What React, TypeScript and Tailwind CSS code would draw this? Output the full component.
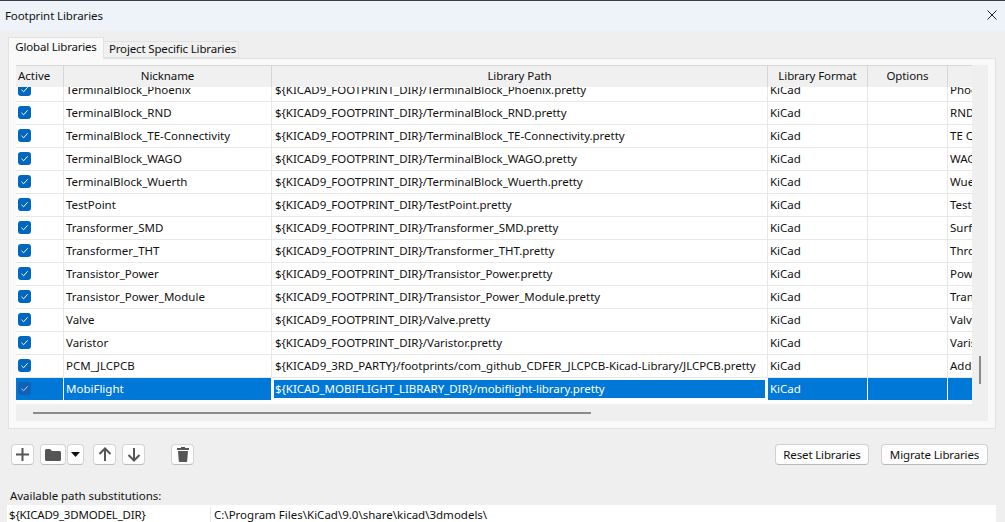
const FONT = "font-['Noto_Sans','Open_Sans',sans-serif]";

const rows = [
  { name: 'TerminalBlock_Phoenix', path: '${KICAD9_FOOTPRINT_DIR}/TerminalBlock_Phoenix.pretty', desc: 'Phoenix terminal blocks' },
  { name: 'TerminalBlock_RND', path: '${KICAD9_FOOTPRINT_DIR}/TerminalBlock_RND.pretty', desc: 'RND terminal blocks' },
  { name: 'TerminalBlock_TE-Connectivity', path: '${KICAD9_FOOTPRINT_DIR}/TerminalBlock_TE-Connectivity.pretty', desc: 'TE Connectivity' },
  { name: 'TerminalBlock_WAGO', path: '${KICAD9_FOOTPRINT_DIR}/TerminalBlock_WAGO.pretty', desc: 'WAGO terminal blocks' },
  { name: 'TerminalBlock_Wuerth', path: '${KICAD9_FOOTPRINT_DIR}/TerminalBlock_Wuerth.pretty', desc: 'Wuerth terminal blocks' },
  { name: 'TestPoint', path: '${KICAD9_FOOTPRINT_DIR}/TestPoint.pretty', desc: 'Test points' },
  { name: 'Transformer_SMD', path: '${KICAD9_FOOTPRINT_DIR}/Transformer_SMD.pretty', desc: 'Surface mount' },
  { name: 'Transformer_THT', path: '${KICAD9_FOOTPRINT_DIR}/Transformer_THT.pretty', desc: 'Through hole' },
  { name: 'Transistor_Power', path: '${KICAD9_FOOTPRINT_DIR}/Transistor_Power.pretty', desc: 'Power transistors' },
  { name: 'Transistor_Power_Module', path: '${KICAD9_FOOTPRINT_DIR}/Transistor_Power_Module.pretty', desc: 'Transistor modules' },
  { name: 'Valve', path: '${KICAD9_FOOTPRINT_DIR}/Valve.pretty', desc: 'Valves' },
  { name: 'Varistor', path: '${KICAD9_FOOTPRINT_DIR}/Varistor.pretty', desc: 'Varistors' },
  { name: 'PCM_JLCPCB', path: '${KICAD9_3RD_PARTY}/footprints/com_github_CDFER_JLCPCB-Kicad-Library/JLCPCB.pretty', desc: 'Added by PCM' },
  { name: 'MobiFlight', path: '${KICAD_MOBIFLIGHT_LIBRARY_DIR}/mobiflight-library.pretty', desc: '', selected: true },
];

const COLS = 'grid grid-cols-[48px_208px_496px_100px_80px_24px]';

function Check({ selected }: { selected?: boolean }) {
  return (
    <span className={`flex items-center justify-center w-[13px] h-[13px] rounded-[3px] ${selected ? 'bg-[#0f62b4]' : 'bg-[#0067c0]'}`}>
      <svg width="9" height="9" viewBox="0 0 9 9" fill="none">
        <path d="M1.5 4.8 L3.6 6.8 L7.6 2.3" stroke={selected ? '#b8d4ee' : '#ffffff'} strokeWidth="1" />
      </svg>
    </span>
  );
}

function Row({ row, first }: { row: (typeof rows)[number]; first?: boolean }) {
  const sel = row.selected;
  const cell = `flex items-center overflow-hidden whitespace-nowrap px-[2px] border-r ${sel ? 'border-[#ffffff] bg-[#0078d7] text-white' : 'border-[#e8e8e8]'}`;
  return (
    <div className={`${COLS} h-[23px] border-b ${first ? '-mt-[8px]' : ''} ${sel ? 'border-white' : 'border-[#e8e8e8]'}`}>
      <div className={`flex items-center pl-[2px] pb-[1px] border-r ${sel ? 'border-white bg-[#0078d7]' : 'border-[#e8e8e8]'}`}>
        <Check selected={sel} />
      </div>
      <div className={cell}>{row.name}</div>
      {sel ? (
        <div className="flex items-center overflow-hidden whitespace-nowrap tracking-[-0.06px] border-2 border-r-[3px] border-white bg-[#0078d7] text-white pl-[1px]">{row.path}</div>
      ) : (
        <div className={cell + ' pl-[3px] tracking-[-0.04px]'}>{row.path}</div>
      )}
      <div className={cell}>KiCad</div>
      <div className={cell}></div>
      <div className={`flex items-center overflow-hidden whitespace-nowrap px-[2px] ${sel ? 'bg-[#0078d7]' : ''}`}>{row.desc}</div>
    </div>
  );
}

function HeadCell({ label, last }: { label?: string; last?: boolean }) {
  return (
    <div className={`flex items-center justify-center pb-[1px] tracking-[-0.1px] ${last ? '' : 'border-r border-[#d6d6d6]'}`}>{label}</div>
  );
}

function IconButton({ children, className }: { children: React.ReactNode; className: string }) {
  return (
    <button className={`flex items-center justify-center h-[21px] rounded-[4px] bg-[#fdfdfd] border border-[#d4d4d4] border-b-[#bcbcbc] ${className}`}>
      {children}
    </button>
  );
}

function TextButton({ label, className }: { label: string; className: string }) {
  return (
    <button className={`flex items-center justify-center tracking-[-0.15px] h-[21px] rounded-[4px] bg-[#fdfdfd] border border-[#d0d0d0] border-b-[#b8b8b8] ${className}`}>
      {label}
    </button>
  );
}

export default function App() {
  return (
    <div className={`${FONT} w-[1005px] h-[522px] overflow-hidden flex flex-col bg-[#efefef] text-[11.5px] leading-none text-[#111111]`}>
      <div className="h-px shrink-0 bg-[#3a3f47]" />
      <div className="h-[30px] shrink-0 flex items-center justify-between pl-[5px] pr-[8px] pb-[1px] bg-[#eef3fa]">
        <span className="tracking-[-0.1px]">Footprint Libraries</span>
        <svg width="10" height="10" viewBox="0 0 10 10" fill="none" className="-mt-[1px]">
          <path d="M0.5 0.5 L9.5 9.5 M9.5 0.5 L0.5 9.5" stroke="#222222" strokeWidth="1" />
        </svg>
      </div>

      <div className="flex items-end h-[27px] shrink-0 pl-[8px]">
        <div className="flex items-center justify-center whitespace-nowrap tracking-[-0.2px] w-[96px] h-[22px] pb-[3px] -mb-px z-10 bg-[#f9f9f9] border border-b-0 border-[#e2e2e2]">Global Libraries</div>
        <div className="flex items-center justify-center whitespace-nowrap tracking-[-0.15px] w-[135px] h-[17px] pl-[3px] pb-[1px] bg-[#f0f0f0] border border-l-0 border-[#e2e2e2]">Project Specific Libraries</div>
      </div>

      <div className="mx-[8px] w-[988px] h-[371px] shrink-0 px-[7px] pt-[6px] bg-[#f9f9f9] border border-[#e2e2e2]">
        <div className="flex flex-col w-[972px] h-[356px] bg-[#efefef] overflow-hidden">
          <div className={`${COLS} w-[956px] h-[22px] shrink-0 border-t border-[#d6d6d6] bg-[#f0f0f0] z-10`}>
            <div className="flex items-center pl-[2px] pb-[1px] border-r border-[#d6d6d6]">Active</div>
            <HeadCell label="Nickname" />
            <HeadCell label="Library Path" />
            <HeadCell label="Library Format" />
            <HeadCell label="Options" />
            <HeadCell last />
          </div>
          <div className="relative flex-1">
            <div className="w-[956px] h-[317px] bg-white overflow-hidden">
              {rows.map((r, i) => (
                <Row key={r.name} row={r} first={i === 0} />
              ))}
            </div>
            <div className="absolute left-[17px] top-[325px] w-[558px] h-[2px] bg-[#8a8a8a]" />
            <div className="absolute left-[963px] top-[269px] w-[2px] h-[28px] bg-[#8a8a8a]" />
          </div>
        </div>
      </div>

      <div className="flex items-center justify-between h-[21px] mt-[15px] shrink-0 pl-[11px] pr-[17px]">
        <div className="flex items-center">
          <IconButton className="w-[23px]">
            <svg width="15" height="15" viewBox="0 0 15 15" fill="none">
              <path d="M7.5 1 V14 M1 7.5 H14" stroke="#555555" strokeWidth="2" />
            </svg>
          </IconButton>
          <IconButton className="w-[26px] ml-[6px]">
            <svg width="16" height="12" viewBox="0 0 16 12" fill="#555555">
              <path d="M0 1.5 a1.5 1.5 0 0 1 1.5 -1.5 h3.5 l2 2 h7.5 a1.5 1.5 0 0 1 1.5 1.5 v7 a1.5 1.5 0 0 1 -1.5 1.5 h-13 a1.5 1.5 0 0 1 -1.5 -1.5 z" />
            </svg>
          </IconButton>
          <IconButton className="w-[17px] ml-px">
            <svg width="9" height="5" viewBox="0 0 9 5" fill="#111111">
              <path d="M0 0 H9 L4.5 5 Z" />
            </svg>
          </IconButton>
          <IconButton className="w-[23px] ml-[9px]">
            <svg width="14" height="15" viewBox="0 0 14 15" fill="none">
              <path d="M7 14 V1.5 M1.5 7 L7 1.5 L12.5 7" stroke="#555555" strokeWidth="2" />
            </svg>
          </IconButton>
          <IconButton className="w-[23px] ml-[6px]">
            <svg width="14" height="15" viewBox="0 0 14 15" fill="none">
              <path d="M7 1 V13.5 M1.5 8 L7 13.5 L12.5 8" stroke="#555555" strokeWidth="2" />
            </svg>
          </IconButton>
          <IconButton className="w-[23px] ml-[26px]">
            <svg width="12" height="15" viewBox="0 0 12 15" fill="#555555">
              <path d="M4 0 h4 v1 h4 v2 h-12 v-2 h4 z M1 4 h10 l-0.8 10 a1 1 0 0 1 -1 1 h-6.4 a1 1 0 0 1 -1 -1 z" />
            </svg>
          </IconButton>
        </div>
        <div className="flex items-center gap-[12px]">
          <TextButton label="Reset Libraries" className="w-[94px]" />
          <TextButton label="Migrate Libraries" className="w-[107px]" />
        </div>
      </div>

      <div className="mt-[23px] pl-[10px] h-[15px] shrink-0 flex items-center tracking-[-0.05px]">Available path substitutions:</div>
      <div className="flex items-center ml-[7px] mt-[2px] w-[989px] h-[17px] pt-[2px] shrink-0 bg-white">
        <div className="w-[204px] pl-[2px] h-full flex items-center tracking-[-0.2px] border-r border-[#e8e8e8]">{'${KICAD9_3DMODEL_DIR}'}</div>
        <div className="pl-[3px]">C:\Program Files\KiCad\9.0\share\kicad\3dmodels\</div>
      </div>
    </div>
  );
}
